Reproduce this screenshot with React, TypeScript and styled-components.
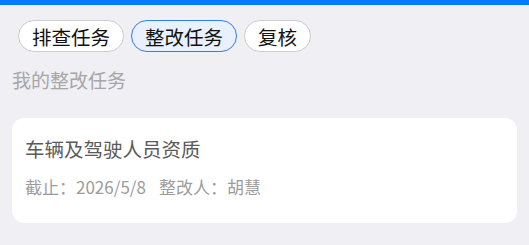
import React, { useState } from 'react';
import styled, { createGlobalStyle, css } from 'styled-components';

const GlobalStyle = createGlobalStyle`
  html, body {
    margin: 0;
    padding: 0;
    background: #efeff4;
    font-family: "Noto Sans CJK SC", "Noto Sans", sans-serif;
  }
`;

const Page = styled.div`
  min-height: 245px;
  background: #efeff4;
  border-top: 5px solid #007aff;
  box-sizing: border-box;
`;

const TabRow = styled.div`
  display: flex;
  flex-direction: row;
  gap: 7px;
  padding: 15px 18px 0;
`;

const Tab = styled.div<{ selected: boolean }>`
  height: 32px;
  box-sizing: border-box;
  padding: 0 13px;
  display: flex;
  align-items: center;
  border-radius: 16px;
  border: 1px solid #cccccc;
  background: #ffffff;
  color: #111111;
  font-size: 19.5px;
  cursor: pointer;
  ${({ selected }) =>
    selected &&
    css`
      border-color: #2f7fe8;
      background: #e8f1fd;
    `}
`;

const SectionTitle = styled.div`
  padding: 0 12px;
  margin-top: 16px;
  font-size: 19px;
  line-height: 24px;
  color: #a6a6a6;
`;

const Card = styled.div`
  margin: 26px 12px 0;
  background: #ffffff;
  border-radius: 12px;
  padding: 19px 13px 25px;
  display: flex;
  flex-direction: column;
  gap: 15px;
`;

const CardTitle = styled.div`
  font-size: 19.5px;
  line-height: 24px;
  color: #5a5a5a;
`;

const Meta = styled.div`
  display: flex;
  flex-direction: row;
  gap: 13px;
  font-size: 17px;
  line-height: 22px;
  color: #9c9c9c;
`;

const tabs = ['排查任务', '整改任务', '复核'];

const App: React.FC = () => {
  const [active, setActive] = useState<number>(1);

  return (
    <Page>
      <GlobalStyle />
      <TabRow>
        {tabs.map((name, i) => (
          <Tab key={name} selected={active === i} onClick={() => setActive(i)}>
            {name}
          </Tab>
        ))}
      </TabRow>
      <SectionTitle>我的整改任务</SectionTitle>
      <Card>
        <CardTitle>车辆及驾驶人员资质</CardTitle>
        <Meta>
          <span>截止：2026/5/8</span>
          <span>整改人：胡慧</span>
        </Meta>
      </Card>
    </Page>
  );
};

export default App;
